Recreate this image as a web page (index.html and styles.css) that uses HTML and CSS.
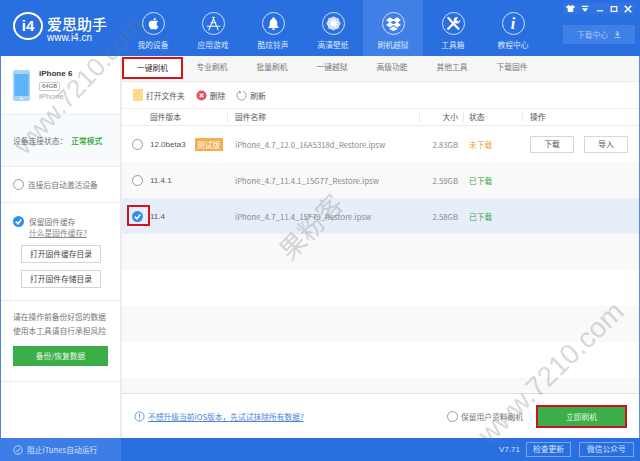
FILE: index.html
```html
<!DOCTYPE html>
<html lang="zh-CN">
<head>
    <meta charset="UTF-8">
    <title>爱思助手</title>
    <link rel="stylesheet" href="styles.css">
</head>
<body>
    <div class="app">
        <header class="topbar">
            <div class="logo">
                <div class="logo-mark">i4</div>
                <div class="logo-text">
                    <div class="logo-name">爱思助手</div>
                    <div class="logo-url">www.i4.cn</div>
                </div>
            </div>
            <nav class="nav">
                <div class="nav-item">
                    <span class="nav-icon"><svg viewBox="0 0 24 24" width="15" height="15"><path fill="#fff" d="M17 12.600c0-2.300 1.900-3.400 2-3.500-1.100-1.600-2.800-1.800-3.400-1.800-1.400-.1-2.800.9-3.500.9s-1.900-.9-3.100-.8c-1.600 0-3.100.9-3.900 2.300-1.700 2.900-.4 7.200 1.200 9.500.8 1.100 1.700 2.400 3 2.400 1.200-.1 1.700-.8 3.100-.8s1.900.8 3.100.8c1.300 0 2.100-1.100 2.900-2.300.9-1.300 1.300-2.600 1.300-2.700-.1 0-2.700-1-2.700-4zM14.800 5.600c.6-.8 1.100-1.900 1-3-1 0-2.100.6-2.800 1.400-.6.7-1.100 1.800-1 2.900 1.100.1 2.200-.5 2.800-1.300z"/></svg></span>
                    <span>我的设备</span>
                </div>
                <div class="nav-item">
                    <span class="nav-icon"><svg viewBox="0 0 24 24" width="17" height="17"><path fill="none" stroke="#fff" stroke-width="1.500" stroke-linecap="round" d="M13 3 5.500 21M11 3l7.500 18M3 16h18M8.500 11h7"/></svg></span>
                    <span>应用游戏</span>
                </div>
                <div class="nav-item">
                    <span class="nav-icon"><svg viewBox="0 0 24 24" width="15" height="15"><path fill="#fff" d="M12 2a2 2 0 0 0-2 2v.6C7.400 5.400 6 7.700 6 10.500V15l-2 3v1h16v-1l-2-3v-4.500c0-2.800-1.400-5.100-4-5.900V4a2 2 0 0 0-2-2zM9.500 20a2.500 2.500 0 0 0 5 0z"/></svg></span>
                    <span>酷炫铃声</span>
                </div>
                <div class="nav-item">
                    <span class="nav-icon"><svg viewBox="0 0 24 24" width="17" height="17"><g fill="#fff" fill-opacity=".75"><circle cx="12" cy="5.500" r="3.500"/><circle cx="12" cy="18.500" r="3.500"/><circle cx="5.500" cy="12" r="3.500"/><circle cx="18.500" cy="12" r="3.500"/><circle cx="7.400" cy="7.400" r="3.500"/><circle cx="16.600" cy="7.400" r="3.500"/><circle cx="7.400" cy="16.600" r="3.500"/><circle cx="16.600" cy="16.600" r="3.500"/></g><circle cx="12" cy="12" r="4" fill="#fff"/></svg></span>
                    <span>高清壁纸</span>
                </div>
                <div class="nav-item active">
                    <span class="nav-icon"><svg viewBox="0 0 24 24" width="17" height="17"><path fill="#fff" d="M7 3 1.500 7 6 10.500 1.500 14 7 17.500l5-3.500 5 3.500 5.500-3.500L18 10.500 22.500 7 17 3l-5 3.500zM12 8l4.500 2.500L12 13l-4.500-2.500zM6.500 18.500V20l5.500 2.500 5.500-2.500v-1.500L17 19l-5-3-5 3z"/></svg></span>
                    <span>刷机越狱</span>
                </div>
                <div class="nav-item">
                    <span class="nav-icon"><svg viewBox="0 0 24 24" width="17" height="17"><path fill="none" stroke="#fff" stroke-width="3.200" stroke-linecap="round" d="M4.500 19.500 15 9M8 8l11 11.500"/><path fill="#fff" d="M14 3.500a5 5 0 0 0-1.500 5.500l3 3a5 5 0 0 0 6-5.500L19 9.500 16 7l2.500-3.500a5 5 0 0 0-4.500 0zM2.500 4 5 2.500 9.500 7 7.500 9z"/></svg></span>
                    <span>工具箱</span>
                </div>
                <div class="nav-item">
                    <span class="nav-icon nav-info">i</span>
                    <span>教程中心</span>
                </div>
            </nav>
            <div class="top-right">
                <div class="win-controls">
                    <svg viewBox="0 0 10 10" width="9" height="9"><path fill="#fff" d="M3 1 0 3l1 2 1-.5V9h6V4.500l1 .5 1-2-3-2-2 1.500z"/></svg>
                    <svg viewBox="0 0 10 10" width="8" height="8"><path fill="#fff" d="M1 1h8v1.500H1zM1 4h8L5 8.500z"/></svg>
                    <svg viewBox="0 0 10 10" width="8" height="8"><path fill="#fff" d="M1 6.500h8V8H1z"/></svg>
                    <svg viewBox="0 0 10 10" width="8" height="8"><path fill="none" stroke="#fff" stroke-width="1.500" d="M1.500 2h7v6h-7z"/></svg>
                    <svg viewBox="0 0 10 10" width="8" height="8"><path fill="none" stroke="#fff" stroke-width="2" d="m1 1 8 8M9 1 1 9"/></svg>
                </div>
                <div class="download-center">下载中心
                    <svg viewBox="0 0 10 10" width="7" height="7"><path fill="#a9c8f5" d="M4 0h2v4h2.500L5 7.500 1.500 4H4zM1 8.500h8V10H1z"/></svg>
                </div>
            </div>
        </header>

        <div class="content">
            <aside class="sidebar">
                <section class="device">
                    <svg class="phone" viewBox="0 0 17 31" width="17" height="31"><rect width="17" height="31" rx="2.500" fill="#a8d3f7"/><rect x="1.500" y="4" width="14" height="22" fill="#5db4fb"/><circle cx="8.500" cy="28.500" r="1.300" fill="#e8f4fd"/></svg>
                    <div class="device-info">
                        <div class="device-name">iPhone 6</div>
                        <span class="device-size">64GB</span>
                        <div class="device-type">iPhone</div>
                    </div>
                </section>
                <section class="status">设备连接状态：<b class="green">正常模式</b></section>
                <section class="auto-activate">
                    <span class="radio"></span>连接后自动激活设备
                </section>
                <section class="cache">
                    <div class="cache-head">
                        <span class="radio checked"><svg viewBox="0 0 10 10"><path fill="none" stroke="#fff" stroke-width="1.500" d="m2.500 5.200 2 1.800 3-3.800"/></svg></span>
                        <div>
                            <div>保留固件缓存</div>
                            <div class="cache-link">什么是固件缓存?</div>
                        </div>
                    </div>
                    <div class="side-btn">打开固件缓存目录</div>
                    <div class="side-btn">打开固件存储目录</div>
                </section>
                <section class="warn">
                    <p>请在操作前备份好您的数据<br>使用本工具请自行承担风险</p>
                    <div class="green-btn backup-btn">备份/恢复数据</div>
                </section>
            </aside>

            <main class="main">
                <div class="tabs">
                    <div class="tab selected">一键刷机</div>
                    <div class="tab">专业刷机</div>
                    <div class="tab">批量刷机</div>
                    <div class="tab">一键越狱</div>
                    <div class="tab">高级功能</div>
                    <div class="tab">其他工具</div>
                    <div class="tab">下载固件</div>
                </div>
                <div class="toolbar">
                    <span class="tool"><span class="folder"></span>打开文件夹</span>
                    <span class="tool"><svg viewBox="0 0 12 12" width="11" height="11"><circle cx="6" cy="6" r="5.500" fill="#e8515d"/><path stroke="#fff" stroke-width="1.500" d="m4 4 4 4M8 4 4 8"/></svg>删除</span>
                    <span class="tool"><svg viewBox="0 0 12 12" width="11" height="11"><path fill="none" stroke="#63b465" d="M7.500 1.200A5 5 0 1 1 3 2"/><path fill="#63b465" d="M3.500 0v3.500H6z"/></svg>刷新</span>
                </div>
                <div class="table-row table-head">
                    <span></span>
                    <span class="col-version">固件版本</span>
                    <span class="col-name">固件名称</span>
                    <span class="col-size">大小</span>
                    <span class="col-status">状态</span>
                    <span class="col-ops">操作</span>
                </div>
                <div class="rows">
                    <div class="table-row">
                        <span class="radio"></span>
                        <span class="version">12.0beta3<em class="badge">测试版</em></span>
                        <span>iPhone_4.7_12.0_16A5318d_Restore.ipsw</span>
                        <span class="col-size">2.83GB</span>
                        <span class="col-status orange">未下载</span>
                        <span class="ops"><span class="op-btn">下载</span><span class="op-btn">导入</span></span>
                    </div>
                    <div class="table-row">
                        <span class="radio"></span>
                        <span class="version">11.4.1</span>
                        <span>iPhone_4.7_11.4.1_15G77_Restore.ipsw</span>
                        <span class="col-size">2.59GB</span>
                        <span class="col-status green">已下载</span>
                        <span></span>
                    </div>
                    <div class="table-row current">
                        <span class="radio checked"><svg viewBox="0 0 10 10"><path fill="none" stroke="#fff" stroke-width="1.500" d="m2.500 5.200 2 1.800 3-3.800"/></svg></span>
                        <span class="version">11.4</span>
                        <span>iPhone_4.7_11.4_15F79_Restore.ipsw</span>
                        <span class="col-size">2.58GB</span>
                        <span class="col-status green">已下载</span>
                        <span></span>
                    </div>
                    <div class="table-row"></div>
                    <div class="table-row"></div>
                    <div class="table-row"></div>
                    <div class="table-row"></div>
                    <div class="table-row"></div>
                </div>
                <div class="actions">
                    <svg viewBox="0 0 12 12" width="11" height="11"><circle cx="6" cy="6" r="5" fill="none" stroke="#5d8fd8"/><path stroke="#5d8fd8" d="M6 3v4M6 8v1"/></svg>
                    <span class="erase-link">不想升级当前iOS版本，先试试抹除所有数据?</span>
                    <span class="radio"></span>
                    <span class="keep-text">保留用户资料刷机</span>
                    <div class="green-btn flash-btn">立即刷机</div>
                </div>
            </main>
        </div>

        <footer class="footer">
            <div class="footer-left">
                <svg viewBox="0 0 12 12" width="10" height="10"><circle cx="6" cy="6" r="5" fill="none" stroke="#d5e4fb"/><path fill="none" stroke="#d5e4fb" d="m3.500 6 2 2 3-4"/></svg>
                阻止iTunes自动运行
            </div>
            <div class="footer-right">
                <span class="version-no">V7.71</span>
                <span class="foot-btn update-btn">检查更新</span>
                <span class="foot-btn wechat-btn">微信公众号</span>
            </div>
        </footer>

        <div class="mark mark-one">www.7210.com</div>
        <div class="mark mark-two">www.7210.com</div>
        <div class="mark mark-three">果粉客</div>
        <div class="red-radio"></div>
    </div>
</body>
</html>
```

FILE: styles.css
```css
* {
    box-sizing: border-box;
}
body {
    margin: 0;
    font-family: "Noto Sans CJK SC", "Noto Sans", sans-serif;
    font-size: 7.75px;
    color: #666;
}
.app {
    position: relative;
    width: 640px;
    height: 461px;
    overflow: hidden;
    display: flex;
    flex-direction: column;
    background: white;
}
.topbar {
    height: 56px;
    flex: none;
    display: flex;
    background: #2a6fe0;
    color: #dbe8fb;
}
.logo {
    width: 123px;
    display: flex;
    gap: 4px;
    padding: 12px 0 0 13px;
}
.logo-mark {
    width: 30px;
    height: 28px;
    border: 2px solid white;
    border-radius: 50%;
    color: white;
    font: bold 15px/23px "Liberation Sans", sans-serif;
    text-align: center;
}
.logo-text {
    padding-top: 3px;
}
.logo-name {
    color: white;
    font-size: 15px;
    line-height: 17px;
    font-weight: 500;
}
.logo-url {
    color: white;
    font: 10px/11px "Liberation Sans", sans-serif;
}
.nav {
    display: flex;
    width: 420px;
}
.nav-item {
    width: 60px;
    display: flex;
    flex-direction: column;
    align-items: center;
    padding-top: 12px;
    gap: 4px;
    line-height: 11px;
}
.nav-item.active {
    background: #3f7fe6;
}
.nav-icon {
    width: 23px;
    height: 23px;
    border: 1px solid #cfe0fa;
    border-radius: 50%;
    display: flex;
    align-items: center;
    justify-content: center;
}
.nav-info {
    color: white;
    font: italic bold 16px "Liberation Serif", serif;
}
.top-right {
    flex: 1;
    padding: 3px 5px 0 20px;
}
.win-controls {
    height: 11px;
    display: flex;
    justify-content: space-between;
    align-items: center;
    padding: 0 3px;
    background: #3275e2;
}
.download-center {
    height: 19px;
    margin-top: 11px;
    display: flex;
    align-items: center;
    justify-content: center;
    gap: 6px;
    background: #3f7fe6;
    color: #a9c8f5;
}
.content {
    flex: 1;
    min-height: 0;
    display: flex;
}
.sidebar {
    width: 122px;
    flex: none;
    border-left: 1px solid #4d86e6;
    border-right: 2px solid #ececec;
}
.sidebar section {
    border-bottom: 1px solid #ebebeb;
}
.device {
    height: 59px;
    display: flex;
    align-items: center;
    gap: 9px;
    padding-left: 12px;
}
.device-name {
    color: #333;
    font: bold 8px/11px "Liberation Sans", sans-serif;
}
.device-size {
    display: inline-block;
    border: 1px solid #ccc;
    border-radius: 1px;
    padding: 0 2px;
    font: 6px/7px "Liberation Sans", sans-serif;
}
.device-type {
    color: #aaa;
    font: 8px/12px "Liberation Sans", sans-serif;
}
.status {
    height: 52px;
    padding-left: 12px;
    background: #f8fbfd;
    display: flex;
    align-items: center;
    gap: 4px;
    color: #777;
}
.green {
    color: #3aa53d;
}
.status .green {
    color: #22a52a;
    font-weight: 500;
}
.orange {
    color: #f0a030;
}
.radio {
    width: 11px;
    height: 11px;
    flex: none;
    display: block;
    border: 1px solid #999;
    border-radius: 50%;
    background: white;
}
.radio.checked {
    border: none;
    background: #2e8ff0;
}
.radio svg {
    display: block;
}
.auto-activate {
    height: 36px;
    display: flex;
    align-items: center;
    gap: 4px;
    padding-left: 12px;
    color: #777;
}
.cache {
    height: 98px;
    padding-top: 13px;
}
.cache-head {
    display: flex;
    gap: 5px;
    padding-left: 12px;
    line-height: 11px;
    color: #777;
}
.cache-link {
    text-decoration: underline;
    color: #888;
}
.side-btn {
    width: 80px;
    height: 18px;
    margin: 7px 0 0 20px;
    border: 1px solid #d5d5d5;
    text-align: center;
    line-height: 15px;
    color: #444;
}
.warn {
    height: 81px;
    padding: 9px 0 0 12px;
    color: #777;
}
.warn p {
    margin: 0 0 8px;
    line-height: 14px;
}
.green-btn {
    background: #3bae47;
    color: #e6f6e8;
    text-align: center;
}
.backup-btn {
    width: 95px;
    height: 20px;
    line-height: 19px;
}
.main {
    flex: 1;
    min-width: 0;
    display: flex;
    flex-direction: column;
    border-right: 1px solid #5b8de0;
}
.tabs {
    height: 26px;
    flex: none;
    display: flex;
    background: #f6f6f6;
    border-bottom: 1px solid #ececec;
    padding-top: 1px;
}
.tab {
    width: 60px;
    height: 22px;
    line-height: 20px;
    text-align: center;
    color: #777;
}
.tab.selected {
    width: 61px;
    margin-right: -1px;
    background: white;
    color: #333;
    border: 2px solid #d6121f;
    line-height: 17px;
}
.toolbar {
    height: 26px;
    flex: none;
    display: flex;
    align-items: center;
    gap: 11px;
    padding-left: 11px;
    color: #555;
}
.tool {
    display: flex;
    align-items: center;
    gap: 3px;
}
.folder {
    width: 10px;
    height: 12px;
    flex: none;
    background: #fbdc8b;
    border-radius: 1px;
}
.table-row {
    height: 36px;
    display: grid;
    grid-template-columns: 28px 85px 185px 38px 72px 1fr;
    align-items: center;
    color: #888;
}
.table-row > .radio {
    margin-left: 10px;
}
.table-head {
    height: 18px;
    color: #555;
    border-top: 1px solid #f2f2f2;
    border-bottom: 1px solid #ececec;
}
.table-head span {
    line-height: 10px;
}
.table-head .col-version {
    border-right: 1px solid #ececec;
    margin-right: 7px;
}
.table-head .col-name {
    border-right: 1px solid #ececec;
}
.table-head .col-size {
    color: #555;
}
.table-head .col-status {
    border-left: 1px solid #ececec;
    border-right: 1px solid #ececec;
    margin: 0 7px 0 5px;
    padding-left: 5px;
}
.col-size {
    text-align: right;
    white-space: nowrap;
}
.col-status {
    padding-left: 11px;
}
.rows {
    flex: 1;
    min-height: 0;
    overflow: hidden;
    border-bottom: 1px solid #e0e0e0;
}
.rows .table-row:nth-child(even) {
    background: #f9f9f9;
}
.rows .table-row.current {
    background: #e6eff9;
}
.version {
    color: #555;
    display: flex;
    align-items: center;
    font: 8px "Liberation Sans", sans-serif;
}
.badge {
    width: 28px;
    height: 13px;
    margin-left: 9px;
    background: #f3ad53;
    color: #fff;
    font: normal 7.75px/13px "Noto Sans CJK SC", sans-serif;
    text-align: center;
}
.ops {
    display: flex;
    gap: 10px;
}
.op-btn {
    width: 44px;
    height: 17px;
    border: 1px solid #d8d8d8;
    text-align: center;
    line-height: 14px;
    color: #555;
}
.actions {
    height: 44px;
    flex: none;
    display: flex;
    align-items: center;
    padding-left: 12px;
    gap: 3px;
}
.erase-link {
    color: #4d86d8;
    text-decoration: underline;
    width: 296px;
}
.keep-text {
    width: 72px;
    color: #777;
}
.flash-btn {
    width: 91px;
    height: 23px;
    line-height: 19px;
    border: 2px solid #c8141e;
}
.footer {
    height: 23px;
    flex: none;
    display: flex;
    justify-content: space-between;
    align-items: center;
    background: #2a6fe0;
    color: #d5e4fb;
}
.footer-left {
    width: 121px;
    height: 100%;
    display: flex;
    align-items: center;
    gap: 4px;
    padding-left: 13px;
    background: #3f7de6;
}
.footer-right {
    display: flex;
    align-items: center;
    padding-right: 6px;
}
.version-no {
    font: 8px "Liberation Sans", sans-serif;
    margin-right: 6px;
}
.foot-btn {
    height: 15px;
    border: 1px solid #7ba6ec;
    text-align: center;
    line-height: 12px;
}
.update-btn {
    width: 45px;
    margin-right: 8px;
}
.wechat-btn {
    width: 55px;
}
/* watermarks lying over the window */
.mark {
    position: absolute;
    color: rgba(120, 120, 120, 0.3);
    white-space: nowrap;
    pointer-events: none;
}
.mark-one {
    left: -9px;
    top: 70px;
    font: 26px "Liberation Sans", sans-serif;
    transform: rotate(-47deg);
}
.mark-two {
    left: 456px;
    top: 357px;
    font: 28px "Liberation Sans", sans-serif;
    transform: rotate(-44deg);
}
.mark-three {
    left: 271px;
    top: 207px;
    font-size: 26px;
    line-height: 38px;
    transform: rotate(-46deg);
}
.red-radio {
    position: absolute;
    left: 127px;
    top: 205px;
    width: 23px;
    height: 21px;
    border: 2px solid #d6121f;
}
```
